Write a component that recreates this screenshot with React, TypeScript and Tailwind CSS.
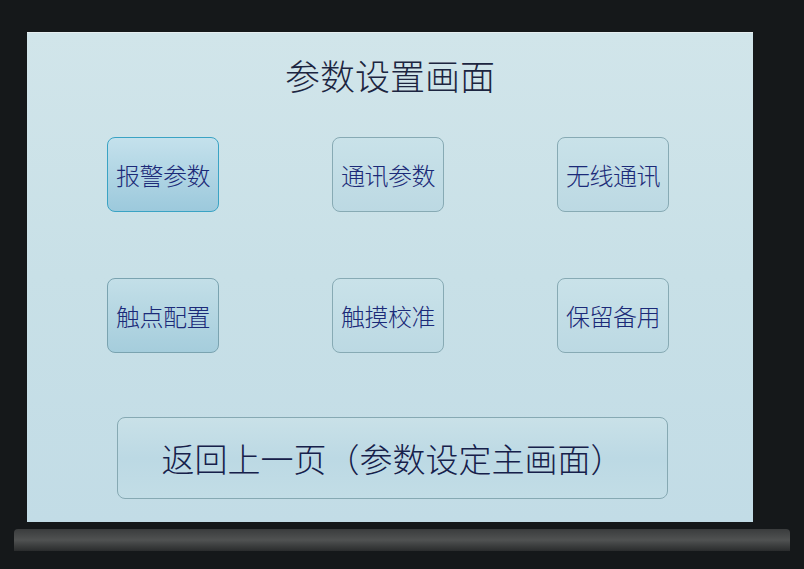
const menuRows = [
  [
    { label: "报警参数", active: true },
    { label: "通讯参数" },
    { label: "无线通讯" },
  ],
  [
    { label: "触点配置", pressed: true },
    { label: "触摸校准" },
    { label: "保留备用" },
  ],
];

type MenuItem = { label: string; active?: boolean; pressed?: boolean };

function MenuButton({ item }: { item: MenuItem }) {
  const tone = item.active
    ? "border-[#3aa3c4] bg-gradient-to-b from-[#c4e1ec] to-[#9cc9dc]"
    : item.pressed
      ? "border-[#7aa3b0] bg-gradient-to-b from-[#c3dfe8] to-[#a5cddc]"
      : "border-[#87aab4] bg-gradient-to-b from-[#c9e2e9] to-[#bcd9e3]";
  return (
    <button
      className={`flex h-[75px] w-[112px] items-center justify-center rounded-[8px] border text-[24px] font-light leading-none tracking-[-0.5px] text-[#1b2a78] ${tone}`}
    >
      {item.label}
    </button>
  );
}

export default function App() {
  return (
    <div
      className="h-[569px] w-[804px] overflow-hidden bg-[#15181a]"
      style={{ fontFamily: '"Noto Sans CJK SC", "Noto Sans", sans-serif' }}
    >
      <div className="ml-[27px] mt-[32px] flex h-[490px] w-[726px] flex-col items-start border-t border-[#e6eef0] bg-gradient-to-b from-[#d1e5ea] via-[#c8e0e7] to-[#c2dce6]">
        <h1 className="mt-[22px] w-full text-center text-[35px] font-light leading-[40px] text-[#1c2540]">参数设置画面</h1>

        <div className="ml-[80px] mt-[42px] flex flex-col gap-[66px]">
          {menuRows.map((row, i) => (
            <div key={i} className="flex gap-[113px]">
              {row.map((item) => (
                <MenuButton key={item.label} item={item} />
              ))}
            </div>
          ))}
        </div>

        <button className="ml-[90px] mt-[64px] flex h-[82px] w-[551px] items-center justify-center rounded-[8px] border border-[#86a9b3] bg-gradient-to-b from-[#c9e1e8] via-[#bcd9e4] to-[#c2dde6] text-[33px] font-light leading-none text-[#16204a]">
          返回上一页（参数设定主画面）
        </button>
      </div>

      <div className="mx-[14px] mt-[7px] h-[22px] rounded-t-[4px] bg-gradient-to-b from-[#3a3c3d] via-[#505252] to-[#2a2c2d]" />
    </div>
  );
}
